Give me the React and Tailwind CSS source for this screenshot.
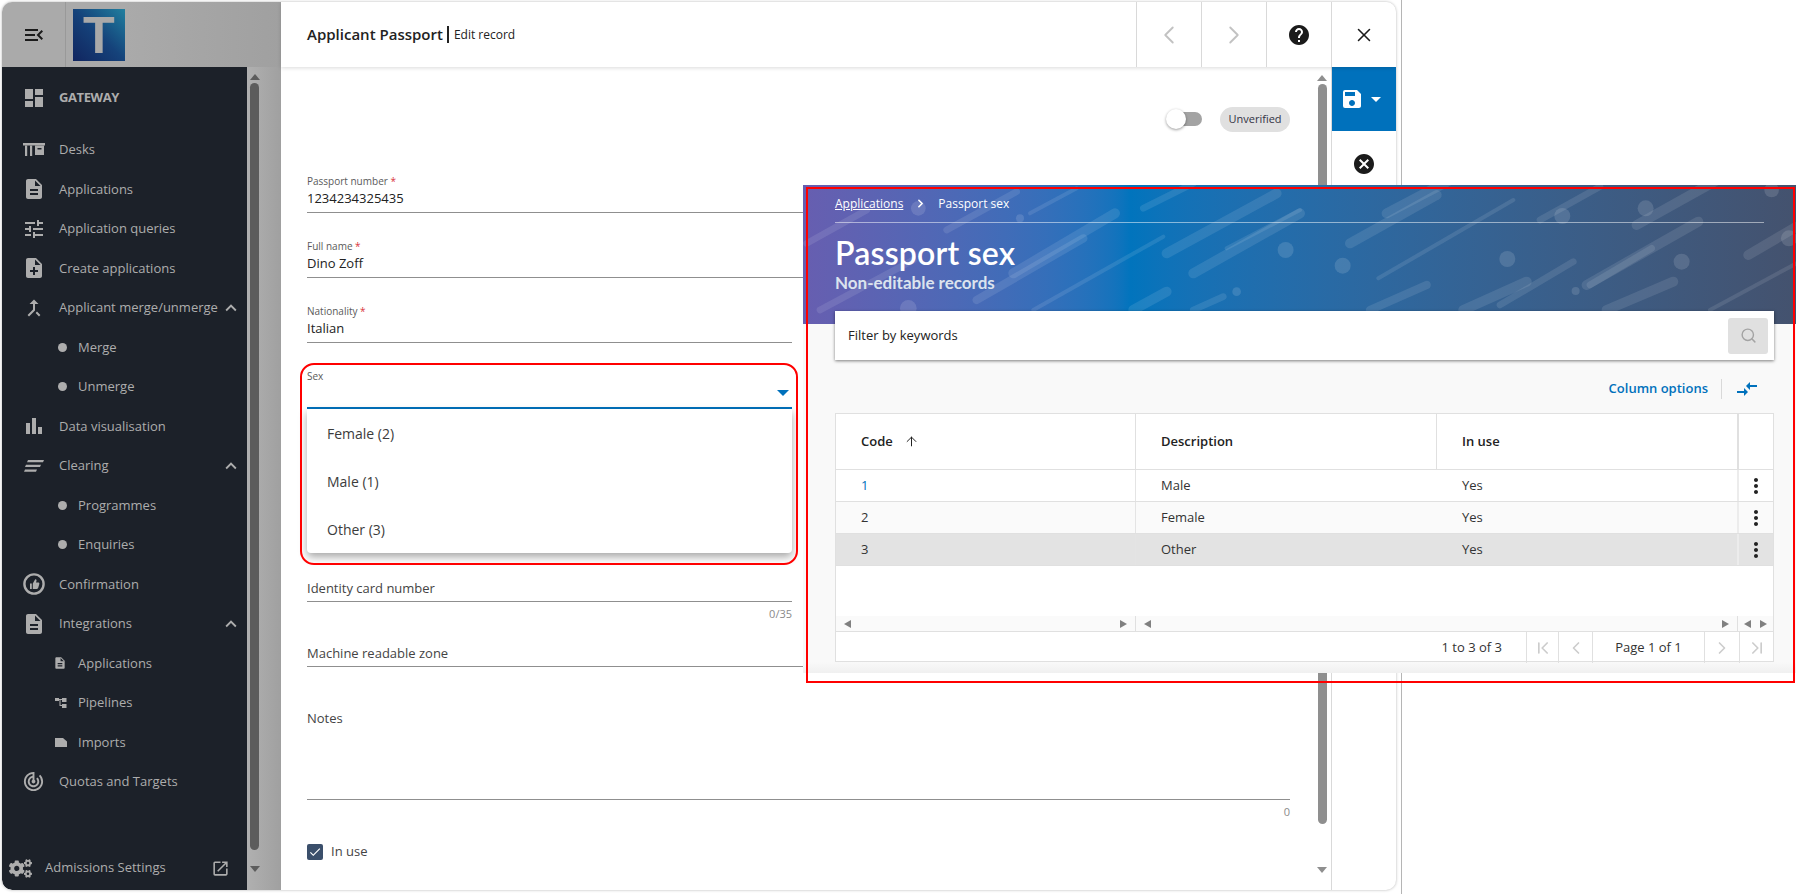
import { ArrowUp, ChevronFirst, ChevronLast, ChevronLeft, ChevronRight, Search, X } from "lucide-react";
import {
  MdArrowDropDown,
  MdBarChart,
  MdCallMerge,
  MdCancel,
  MdCheck,
  MdCompareArrows,
  MdDashboard,
  MdDescription,
  MdExpandLess,
  MdHelp,
  MdMenuOpen,
  MdMoreVert,
  MdNoteAdd,
  MdOpenInNew,
  MdSave,
  MdTrackChanges,
  MdTune,
} from "react-icons/md";
import { FaCogs } from "react-icons/fa";

function DeskIcon({ className }) {
  return (
    <svg viewBox="0 0 22 14" className={className} fill="currentColor">
      <path d="M0 0h22v2.5H0z" />
      <path d="M2 2.5h2.2V13H2zM7 2.5h2.2V13H7z" />
      <path d="M12 2.5h9V12h-9zM14.5 5v1.4h4V5z" fillRule="evenodd" />
    </svg>
  );
}

function ClearingIcon({ className }) {
  return (
    <svg viewBox="0 0 20 12" className={className} fill="currentColor">
      <path d="M4 0h16l-1 2.2H3zM2 4.8h15l-1 2.2H1zM1 9.6h12l-1 2.2H0z" />
    </svg>
  );
}

function ThumbIcon({ className }) {
  return (
    <svg viewBox="0 0 22 22" className={className}>
      <circle cx="11" cy="11" r="9.6" fill="none" stroke="currentColor" strokeWidth="2.4" />
      <path
        d="M7 10.5h1.8V16H7zM9.8 10.5l2.4-4.3c1.2-.2 1.6.8 1.2 2l-.4 1.4h2.2c.9 0 1.3.6 1.1 1.4l-1 3.6c-.2.8-.7 1.3-1.5 1.3H9.8z"
        fill="currentColor"
      />
    </svg>
  );
}

function PipeIcon({ className }) {
  return (
    <svg viewBox="0 0 12 10" className={className} fill="currentColor">
      <path d="M0 0h4v3H0zM7 0h4.5v4H7zM7 6h4.5v4H7zM4 1h3v1H5.5v5H7v1H4.5V2H4z" />
    </svg>
  );
}

function ImportIcon({ className }) {
  return (
    <svg viewBox="0 0 12 9" className={className} fill="currentColor">
      <path d="M0 0h8l4 3.5V9H0z" />
    </svg>
  );
}

function Dot() {
  return <span className="h-[9px] w-[9px] rounded-full bg-[#adadad]" />;
}

const mainItems = [
  { label: "Desks", icon: <DeskIcon className="h-[14px] w-[22px]" /> },
  { label: "Applications", icon: <MdDescription size={24} /> },
  { label: "Application queries", icon: <MdTune size={24} /> },
  { label: "Create applications", icon: <MdNoteAdd size={24} /> },
  { label: "Applicant merge/unmerge", icon: <MdCallMerge size={24} />, open: true },
  { label: "Merge", icon: <Dot />, sub: true },
  { label: "Unmerge", icon: <Dot />, sub: true },
  { label: "Data visualisation", icon: <MdBarChart size={24} /> },
  { label: "Clearing", icon: <ClearingIcon className="h-[12px] w-[20px]" />, open: true },
  { label: "Programmes", icon: <Dot />, sub: true },
  { label: "Enquiries", icon: <Dot />, sub: true },
  { label: "Confirmation", icon: <ThumbIcon className="h-[22px] w-[22px]" /> },
  { label: "Integrations", icon: <MdDescription size={24} />, open: true },
  { label: "Applications", icon: <MdDescription size={14} />, sub: true },
  { label: "Pipelines", icon: <PipeIcon className="h-[10px] w-[12px]" />, sub: true },
  { label: "Imports", icon: <ImportIcon className="h-[9px] w-[12px]" />, sub: true },
  { label: "Quotas and Targets", icon: <MdTrackChanges size={23} /> },
];

function NavItem({ item }) {
  return (
    <div className="flex h-[39.5px] items-center text-[13px]">
      <div className={item.sub ? "flex w-[76px] justify-end pr-[11px]" : "flex w-[57px] justify-center pl-[6px]"}>
        {item.icon}
      </div>
      <span className="flex-1 whitespace-nowrap">{item.label}</span>
      {item.open && <MdExpandLess size={22} className="mr-[5px]" />}
    </div>
  );
}

function Sidebar() {
  return (
    <div className="flex w-[279px] shrink-0 flex-col">
      <div className="flex h-[65px] items-center bg-[#aaaaaa]">
        <div className="flex h-full w-[64px] items-center justify-center border-r border-[#999999] text-[#1b1b1b]">
          <MdMenuOpen size={24} />
        </div>
        <div className="ml-[7px] flex h-[52px] w-[52px] items-center justify-center bg-gradient-to-tr from-[#11255f] via-[#15427a] to-[#22809f] text-[52px] font-bold leading-none text-[#a9a9a9] font-['Liberation_Sans',sans-serif]">
          T
        </div>
        <div className="h-full flex-1 bg-gradient-to-r from-[#aaaaaa] to-[#a0a0a0]" />
      </div>
      <div className="flex min-h-0 flex-1">
        <div className="flex w-[245px] flex-col rounded-bl-[10px] bg-[#1c2129] text-[#adadad]">
          <div className="mt-[11px] mb-[12.5px] flex h-[39.5px] items-center text-[13px] font-bold tracking-[-0.4px]">
            <div className="flex w-[57px] justify-center pl-[6px]">
              <MdDashboard size={24} />
            </div>
            GATEWAY
          </div>
          {mainItems.map((item, i) => (
            <NavItem key={i} item={item} />
          ))}
          <div className="mt-auto mb-[10px] flex h-[24px] items-center pl-[7px] pr-[17px] text-[13px]">
            <FaCogs size={23} />
            <span className="ml-[13px] flex-1">Admissions Settings</span>
            <MdOpenInNew size={19} />
          </div>
        </div>
        <div className="flex flex-1 bg-gradient-to-r from-[#b0b0b0] to-[#a0a0a0] pl-[3px]">
          <div className="flex w-[9px] flex-col items-center">
            <span className="mt-[7px] h-0 w-0 border-x-[5px] border-b-[6px] border-x-transparent border-b-[#5c5c5c]" />
            <div className="mt-[3px] h-[767px] w-[9px] rounded-[5px] bg-[#5c5c5c]" />
            <span className="mt-[16px] h-0 w-0 border-x-[5px] border-t-[6px] border-x-transparent border-t-[#5c5c5c]" />
          </div>
        </div>
      </div>
    </div>
  );
}

function Field({ label, required, value, wide, faint }) {
  return (
    <div className={`${wide ? "w-full" : "w-[485px]"} mb-[24px] h-[41px] border-b border-[#8f8f8f]`}>
      <div className="h-[16px] pt-[2px] text-[10px] leading-[14px] text-[#5a5a5a]">
        {label}
        {required && <span className="text-[#d9363e]"> *</span>}
      </div>
      <div className={`mt-[1px] text-[13px] leading-[18px] ${faint ? "text-[#555555]" : "text-[#222222]"}`}>{value}</div>
    </div>
  );
}

function HeaderButton({ children }) {
  return <div className="flex h-full w-[65px] items-center justify-center border-l border-[#d9d9d9]">{children}</div>;
}

function EditForm() {
  return (
    <div className="relative min-w-0 flex-1 px-[26px] text-[#333333]">
      <div className="flex h-[105px] items-start justify-end gap-[18px] pt-[40px] pr-[-6px]">
        <div className="relative mt-[5px] h-[14px] w-[27px] rounded-full bg-[#a3a3a3]">
          <span className="absolute top-[-3px] left-[-9px] h-[20px] w-[20px] rounded-full bg-white shadow-[0_1px_3px_rgba(0,0,0,0.4)]" />
        </div>
        <div className="flex h-[25px] w-[70px] items-center justify-center rounded-full bg-[#e0e0e0] text-[11px] text-[#333344]">
          Unverified
        </div>
      </div>
      <Field label="Passport number" required value="1234234325435" wide />
      <Field label="Full name" required value="Dino Zoff" wide />
      <Field label="Nationality" required value="Italian" />

      {/* open select */}
      <div className="relative h-[42px] w-[485px] border-b-2 border-[#0071bc]">
        <div className="pt-[2px] text-[10px] leading-[14px] text-[#5a5a5a]">Sex</div>
        <span className="absolute top-[23px] right-[3px] h-0 w-0 border-x-[6px] border-t-[6px] border-x-transparent border-t-[#0071bc]" />
        <div className="absolute top-[42px] left-0 z-10 w-full rounded-b-[4px] bg-white text-[14px] text-[#3c3c3c] shadow-[0_4px_8px_rgba(0,0,0,0.35)]">
          <div className="flex h-[48px] items-center pl-[20px]">Female (2)</div>
          <div className="flex h-[48px] items-center pl-[20px]">Male (1)</div>
          <div className="flex h-[48px] items-center pl-[20px]">Other (3)</div>
        </div>
        <div className="absolute top-[-4px] left-[-7px] z-20 h-[202px] w-[498px] rounded-[14px] border-2 border-[#ff0000]" />
      </div>

      <div className="mt-[168px] h-[25px] w-[485px] border-b border-[#8f8f8f] text-[13px] leading-[22px] text-[#444444]">
        Identity card number
      </div>
      <div className="h-[40px] w-[485px] pt-[4px] text-right text-[11px] leading-[16px] text-[#8a8a8a]">0/35</div>
      <div className="h-[25px] w-full border-b border-[#8f8f8f] text-[13px] leading-[22px] text-[#444444]">
        Machine readable zone
      </div>
      <div className="mt-[41px] h-[92px] w-full border-b border-[#8f8f8f] text-[13px] leading-[20px] text-[#444444]">
        Notes
      </div>
      <div className="h-[42px] pt-[4px] text-right text-[11px] leading-[16px] text-[#8a8a8a]">0</div>
      <div className="flex items-center gap-[8px] text-[13px] text-[#444444]">
        <span className="flex h-[16px] w-[16px] items-center justify-center rounded-[2px] bg-[#3b4f6b] text-white">
          <MdCheck size={14} />
        </span>
        In use
      </div>
    </div>
  );
}

function Banner() {
  const stripesLeft = [
    [690, 100, 830, 25, 12], [640, 280, 945, 100, 30], [1030, 85, 1180, 10, 20], [1100, 220, 1430, 40, 30],
    [1180, 280, 1500, 100, 30], [1280, 205, 1500, 90, 12], [700, 390, 1090, 170, 12], [530, 360, 850, 175, 25],
    [60, 390, 340, 240, 20], [20, 190, 200, 90, 20], [440, 150, 650, 35, 20], [1000, 390, 1100, 335, 30],
    [1180, 390, 1270, 350, 20],
  ];
  const stripesRight = [
    [290, 100, 500, -10, 30], [180, 190, 440, 45, 30], [265, 295, 670, 60, 12], [750, 120, 930, 20, 20],
    [1040, 135, 1300, -10, 30], [1375, 225, 1520, 140, 30], [890, 315, 1225, 125, 30], [900, 315, 1085, 205, 20],
    [240, 390, 410, 315, 25], [950, 390, 1150, 305, 30], [520, 390, 710, 305, 30], [630, 375, 850, 245, 20],
    [1260, 390, 1520, 250, 12],
  ];
  const dotsLeft = [[660, 115, 12], [355, 85, 22], [1310, 335, 13], [1457, 210, 24], [325, 385, 25]];
  const dotsRight = [
    [158, 257, 24], [652, 237, 24], [1175, 245, 24], [857, 333, 12], [817, 108, 24], [1067, 85, 24],
    [1445, 30, 22], [1497, 175, 24],
  ];
  const draw = (stripes, dots) => (
    <>
      {stripes.map((s, i) => (
        <line key={i} x1={s[0]} y1={s[1]} x2={s[2]} y2={s[3]} strokeWidth={s[4]} stroke="#fff" strokeOpacity="0.1" strokeLinecap="round" />
      ))}
      {dots.map((d, i) => (
        <circle key={i} cx={d[0]} cy={d[1]} r={d[2]} fill="#fff" fillOpacity="0.13" />
      ))}
    </>
  );

  return (
    <div className="relative h-[139px] bg-gradient-to-r from-[#675eb0] via-[#0174bd] via-33% to-[#44526e] px-[32px] text-white">
      <svg className="absolute inset-0 h-full w-full" viewBox="0 0 993 139" preserveAspectRatio="none">
        <g transform="translate(-3 -5) scale(0.3333)">{draw(stripesLeft, dotsLeft)}</g>
        <g transform="translate(487 -5) scale(0.3333)">{draw(stripesRight, dotsRight)}</g>
      </svg>
      <div className="relative">
        <div className="flex h-[38px] items-center border-b border-[#ffffff80] pt-[-2px] text-[12px]">
          <span className="underline">Applications</span>
          <ChevronRight size={13} strokeWidth={3} className="mx-[11px]" />
          <span>Passport sex</span>
        </div>
        <div className="mt-[11px] font-['Lato',sans-serif] text-[32px] font-semibold leading-[38px] tracking-[0.2px]">
          Passport sex
        </div>
        <div className="font-['Lato',sans-serif] text-[17px] font-bold leading-[22px] text-[#dbe3ee]">
          Non-editable records
        </div>
      </div>
    </div>
  );
}

function SmallArrow({ dir }) {
  return dir === "left" ? (
    <span className="h-0 w-0 border-y-[4.5px] border-r-[7px] border-y-transparent border-r-[#808080]" />
  ) : (
    <span className="h-0 w-0 border-y-[4.5px] border-l-[7px] border-y-transparent border-l-[#808080]" />
  );
}

const rows = [
  { code: "1", description: "Male", bg: "bg-white", codeColor: "text-[#0071bc]" },
  { code: "2", description: "Female", bg: "bg-[#fafafa]", codeColor: "text-[#333333]" },
  { code: "3", description: "Other", bg: "bg-[#e3e3e3]", codeColor: "text-[#333333]" },
];

function PassportSexPanel() {
  return (
    <div className="absolute top-[185px] left-[803px] z-30 h-[488px] w-[993px] bg-[#f9f9f9] text-[13px] text-[#333333]">
      <Banner />
      <div className="relative mx-[32px] mr-[22px] -mt-[13px] flex h-[49px] items-center justify-between bg-white pr-[6px] pl-[13px] shadow-[0_1px_3px_rgba(0,0,0,0.5)]">
        <span className="text-[13px] text-[#222222]">Filter by keywords</span>
        <div className="flex h-[36px] w-[40px] items-center justify-center rounded-[3px] bg-[#e0e0e0] text-[#a3a3a3]">
          <Search size={17} />
        </div>
      </div>
      <div className="ml-[32px] mr-[22px] flex h-[53px] items-center justify-end pt-[4px] pr-[15px] text-[#0071bc]">
        <span className="text-[13px] font-semibold">Column options</span>
        <span className="mx-[13px] h-[20px] w-px bg-[#d9d9d9]" />
        <MdCompareArrows size={24} />
      </div>
      <div className="ml-[32px] mr-[22px] h-[249px] border border-[#e0e0e0] bg-white">
        <div className="grid h-[56px] grid-cols-[300px_301px_302px_1fr] border-b border-[#e0e0e0] font-semibold text-[#222222]">
          <div className="flex items-center gap-[11px] border-r border-[#e0e0e0] pl-[25px]">
            Code <ArrowUp size={15} strokeWidth={1.6} />
          </div>
          <div className="flex items-center border-r border-[#e0e0e0] pl-[25px]">Description</div>
          <div className="flex items-center border-r-2 border-[#e0e0e0] pl-[25px]">In use</div>
          <div />
        </div>
        {rows.map((row) => (
          <div key={row.code} className={`grid h-[32px] grid-cols-[300px_301px_302px_1fr] border-b border-[#e0e0e0] ${row.bg}`}>
            <div className={`flex items-center border-r border-[#e4e4e4] pl-[25px] ${row.codeColor}`}>{row.code}</div>
            <div className="col-span-1 flex items-center pl-[25px]">{row.description}</div>
            <div className="flex items-center border-r-2 border-[#ececec] pl-[25px]">Yes</div>
            <div className="flex items-center justify-center text-[#222222]">
              <MdMoreVert size={24} />
            </div>
          </div>
        ))}
        <div className="mt-[50px] grid h-[15px] grid-cols-[300px_602px_1fr] border-b-0 bg-[#fafafa]">
          <div className="flex items-center justify-between border-r border-[#e0e0e0] px-[8px]">
            <SmallArrow dir="left" />
            <SmallArrow dir="right" />
          </div>
          <div className="flex items-center justify-between border-r border-[#e0e0e0] px-[8px]">
            <SmallArrow dir="left" />
            <SmallArrow dir="right" />
          </div>
          <div className="flex items-center justify-between px-[6px]">
            <SmallArrow dir="left" />
            <SmallArrow dir="right" />
          </div>
        </div>
        <div className="flex h-[32px] items-center justify-end border-t border-[#e0e0e0] text-[13px]">
          <span className="mr-[24px]">1 to 3 of 3</span>
          <div className="flex h-full w-[32px] items-center justify-center border-l border-[#e0e0e0] text-[#cccccc]">
            <ChevronFirst size={20} />
          </div>
          <div className="flex h-full w-[34px] items-center justify-center border-l border-[#e0e0e0] text-[#cccccc]">
            <ChevronLeft size={20} />
          </div>
          <div className="flex h-full w-[113px] items-center justify-center border-x border-[#e0e0e0]">Page 1 of 1</div>
          <div className="flex h-full w-[34px] items-center justify-center text-[#cccccc]">
            <ChevronRight size={20} />
          </div>
          <div className="flex h-full w-[34px] items-center justify-center border-l border-[#e0e0e0] text-[#cccccc]">
            <ChevronLast size={20} />
          </div>
        </div>
      </div>
      <div className="h-[11px] bg-gradient-to-b from-[#f9f9f9] to-[#f0f0f0]" />
    </div>
  );
}

export default function App() {
  return (
    <div className="relative h-[894px] w-[1797px] overflow-hidden bg-white pt-[2px] pl-[2px] font-['Open_Sans',sans-serif]">
      {/* the window behind the popup */}
      <div className="flex h-[888px] w-[1394px] overflow-hidden rounded-[10px] bg-white shadow-[0_0_3px_rgba(0,0,0,0.3)]">
        <Sidebar />
        <div className="flex min-w-0 flex-1 flex-col">
          <div className="relative z-10 flex h-[65px] items-center bg-white shadow-[0_1px_4px_rgba(0,0,0,0.15)]">
            <div className="flex flex-1 items-center pl-[26px] text-[#222222]">
              <span className="border-r-2 border-[#222222] pr-[4px] text-[15px] font-semibold leading-[17px]">Applicant Passport</span>
              <span className="pl-[5px] text-[12px]">Edit record</span>
            </div>
            <HeaderButton>
              <ChevronLeft size={30} strokeWidth={1.5} className="text-[#c2c2c2]" />
            </HeaderButton>
            <HeaderButton>
              <ChevronRight size={30} strokeWidth={1.5} className="text-[#c2c2c2]" />
            </HeaderButton>
            <HeaderButton>
              <MdHelp size={24} className="text-[#1b1b1b]" />
            </HeaderButton>
            <HeaderButton>
              <X size={22} strokeWidth={1.7} className="text-[#1b1b1b]" />
            </HeaderButton>
          </div>
          <div className="flex min-h-0 flex-1">
            <EditForm />
            <div className="flex w-[16px] shrink-0 flex-col items-center border-r border-[#d9d9d9] pr-[3px]">
              <span className="mt-[8px] h-0 w-0 border-x-[5px] border-b-[6px] border-x-transparent border-b-[#8f8f8f]" />
              <div className="mt-[3px] h-[740px] w-[9px] rounded-[5px] bg-[#8f8f8f]" />
              <span className="mt-[43px] h-0 w-0 border-x-[5px] border-t-[6px] border-x-transparent border-t-[#8f8f8f]" />
            </div>
            <div className="flex w-[64px] shrink-0 flex-col">
              <div className="flex h-[64px] items-center justify-center bg-[#0071bc] text-white">
                <MdSave size={24} />
                <MdArrowDropDown size={24} />
              </div>
              <div className="flex h-[66px] items-center justify-center text-[#1b1b1b]">
                <MdCancel size={24} />
              </div>
            </div>
          </div>
        </div>
      </div>
      <div className="absolute top-0 left-[1401px] h-full w-px bg-[#b5b5b5]" />
      <PassportSexPanel />
      <div className="absolute top-[187px] left-[806px] z-40 h-[496px] w-[989px] border-2 border-[#ff0000]" />
    </div>
  );
}
